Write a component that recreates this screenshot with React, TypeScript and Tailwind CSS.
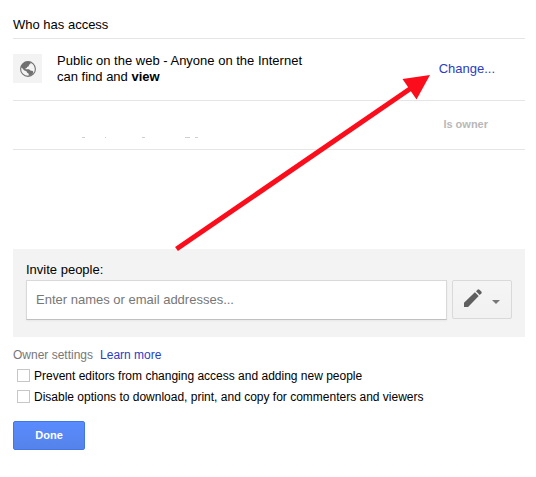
import React, { useState } from 'react';

interface OwnerSetting {
  id: string;
  label: string;
}

const OWNER_SETTINGS: OwnerSetting[] = [
  { id: 'prevent-editors', label: 'Prevent editors from changing access and adding new people' },
  { id: 'disable-download', label: 'Disable options to download, print, and copy for commenters and viewers' },
];

/**
 * Globe with the two land masses, used for public documents
 */
const GlobeIcon: React.FC = () => (
  <svg className="size-4" viewBox="0 0 16 16" fill="#707070" aria-hidden="true">
    <circle cx="8" cy="8" r="7.4" fill="none" stroke="#707070" strokeWidth="1.1" />
    <path d="M.8 6C1.600 3 4.500 .8 8 .6L10.600 1.200 10.400 3 9 3.800 8.800 5.300 7 5.900 6.800 7.100 5.200 7.400 5.800 8.200 9 8.200 10.400 9.400 12.800 10 13.400 11.600 12.400 13.300 10.500 14.600 8.600 15 8.800 12.800 7.200 11.800 6.400 10.200 4 9.200 2.600 7.600Z" />
  </svg>
);

/**
 * Pencil with a rounded, detached eraser
 */
const PencilIcon: React.FC = () => (
  <svg className="size-[18px]" viewBox="0 0 18 18" fill="#5f5f5f" aria-hidden="true">
    <path d="M0 18V13.800L10.900 3.200 14.700 7 4.100 18Z" />
    <path d="M12 2.200 13.600.7Q14.500-.1 15.400.7L17.300 2.600Q18.100 3.500 17.300 4.400L15.700 5.900Z" />
  </svg>
);

const CaretIcon: React.FC = () => (
  <svg className="h-1 w-2" viewBox="0 0 8 4" fill="#777777" aria-hidden="true">
    <path d="M0 0h8L4 4z" />
  </svg>
);

/**
 * Faint leftovers of the hidden owner name
 */
const HiddenName: React.FC = () => (
  <svg className="mt-7 ml-[66px] h-0.5 w-[134px]" viewBox="0 0 134 2" stroke="#cfcfcf" aria-hidden="true">
    <path d="M3 .5h3M26 .5h1M63 .5h3M106 .5h5M116 .5h3" />
  </svg>
);

/**
 * Red arrow pointing at the "Change..." link
 */
const Arrow: React.FC = () => (
  <svg
    className="pointer-events-none absolute top-[70px] left-[170px]"
    width="265"
    height="185"
    viewBox="170 70 265 185"
    aria-hidden="true"
  >
    <path d="M176.500 249 412 87.500" stroke="#fb0d1b" strokeWidth="5" />
    <path d="M430 75 402.500 79 416.500 99.500Z" fill="#fb0d1b" />
  </svg>
);

/**
 * ShareDialog - who has access, invites and owner settings
 */
const ShareDialog: React.FC = () => {
  const [checked, setChecked] = useState<Record<string, boolean>>({});
  const [invitees, setInvitees] = useState('');

  const toggle = (id: string) => setChecked((prev) => ({ ...prev, [id]: !prev[id] }));

  return (
    <main className="relative bg-white pt-[17px] pr-[11px] pb-7 pl-[13px] font-['Liberation_Sans',Arial,sans-serif] text-[13px] leading-4 text-black">
      <h1 className="pb-[5px]">Who has access</h1>

      {/* Access list */}
      <ul>
        <li className="flex h-[62px] items-center border-t border-[#e5e5e5] pb-0.5">
          <span className="flex size-[29px] items-center justify-center bg-[#f3f3f3]">
            <GlobeIcon />
          </span>
          <p className="ml-[15px] w-[250px]">
            Public on the web - Anyone on the Internet can find and <b>view</b>
          </p>
          <a href="#change" className="mr-[30px] ml-auto text-[#2a3dc4]">
            Change...
          </a>
        </li>
        <li className="flex h-[50px] items-center justify-between border-y border-[#e5e5e5] pr-[37px] pb-0.5">
          <HiddenName />
          <span className="text-[11px] font-bold text-[#b8b8b8]">Is owner</span>
        </li>
      </ul>

      {/* Invite people */}
      <section className="mt-[99px] bg-[#f3f3f3] px-[13px] pt-[13px] pb-[17px]">
        <label htmlFor="invite">Invite people:</label>
        <div className="mt-0.5 flex gap-[5px]">
          <input
            id="invite"
            type="text"
            value={invitees}
            onChange={(e) => setInvitees(e.target.value)}
            placeholder="Enter names or email addresses..."
            className="h-10 min-w-0 flex-1 border border-[#d9d9d9] border-b-[#c0c0c0] bg-white px-[9px] pb-0.5 shadow-xs outline-none placeholder:text-[#777]"
          />
          <button
            type="button"
            aria-label="Can edit"
            className="flex h-[39px] w-[60px] items-center justify-center gap-[10px] rounded-xs border border-[#d9d9d9] bg-linear-to-b from-[#f5f5f5] to-[#f1f1f1] text-[#5f5f5f]"
          >
            <span className="pb-[3px]">
              <PencilIcon />
            </span>
            <span className="pt-1">
              <CaretIcon />
            </span>
          </button>
        </div>
      </section>

      {/* Owner settings */}
      <section className="mt-[10px] text-xs">
        <h2>
          <span className="text-[#777]">Owner settings</span>
          <a href="#learn" className="ml-[7px] text-[#2a3dc4]">
            Learn more
          </a>
        </h2>
        <div className="mt-1 space-y-1 pl-1">
          {OWNER_SETTINGS.map((setting) => (
            <label key={setting.id} className="flex h-[17px] items-center gap-1">
              <input
                type="checkbox"
                checked={!!checked[setting.id]}
                onChange={() => toggle(setting.id)}
                className="size-[13px] appearance-none border border-[#c6c6c6] bg-white checked:bg-[#4d7df0]"
              />
              {setting.label}
            </label>
          ))}
        </div>
      </section>

      <button
        type="button"
        className="mt-4 h-[29px] w-[72px] rounded-xs border border-[#3f76e8] bg-linear-to-b from-[#5a8bff] to-[#5583ea] pb-0.5 text-[11px] font-bold text-white"
      >
        Done
      </button>

      <Arrow />
    </main>
  );
};

export default ShareDialog;
